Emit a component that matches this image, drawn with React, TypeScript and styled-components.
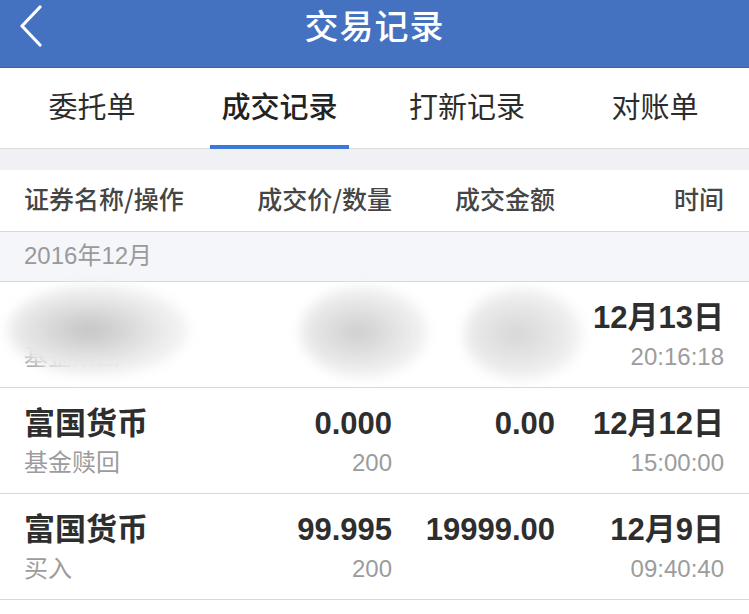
import styled, { createGlobalStyle } from 'styled-components'

const GlobalStyle = createGlobalStyle`
  html, body {
    margin: 0;
    padding: 0;
    background: #ffffff;
  }
  body {
    font-family: "Liberation Sans", "Noto Sans CJK SC", sans-serif;
    -webkit-font-smoothing: antialiased;
  }
`

const Page = styled.div`
  width: 749px;
  height: 614px;
  overflow: hidden;
  background: #ffffff;
`

const NavBar = styled.header`
  position: relative;
  display: flex;
  justify-content: center;
  align-items: flex-start;
  height: 68px;
  padding-top: 2px;
  background: #4572c0;
  border-bottom: 1px solid #3a63a8;
  box-sizing: border-box;
`

const BackButton = styled.button`
  position: absolute;
  left: 12px;
  top: 4px;
  display: flex;
  align-items: center;
  justify-content: center;
  width: 36px;
  height: 44px;
  padding: 0;
  border: none;
  background: transparent;
`

const Title = styled.h1`
  margin: 0;
  height: 46px;
  line-height: 46px;
  color: #ffffff;
  font-family: "Noto Sans CJK SC", sans-serif;
  font-size: 34px;
  font-weight: 500;
  letter-spacing: 1px;
`

const Tabs = styled.nav`
  display: grid;
  grid-template-columns: 184px 139px 184px 140px;
  column-gap: 26px;
  height: 81px;
  background: #ffffff;
  border-bottom: 1px solid #dcdce0;
  box-sizing: border-box;
`

const Tab = styled.div<{ $active?: boolean }>`
  display: flex;
  align-items: center;
  justify-content: center;
  padding-bottom: 4px;
  font-family: "Noto Sans CJK SC", sans-serif;
  font-size: 29px;
  font-weight: ${p => (p.$active ? 500 : 400)};
  color: ${p => (p.$active ? '#222222' : '#2c2c2c')};
  border-bottom: 4px solid ${p => (p.$active ? '#3a78dc' : 'transparent')};
  margin-bottom: -1px;
`

const Spacer = styled.div`
  height: 21px;
  background: #f0f0f5;
`

const Grid = styled.div`
  display: grid;
  grid-template-columns: 218px 150px 163px 169px;
  padding: 0 25px 0 24px;
  border-bottom: 1px solid #d8d8dc;
`

const HeadRow = styled(Grid)`
  height: 62px;
  align-items: center;
  box-sizing: border-box;
`

const HeadCell = styled.div<{ $right?: boolean }>`
  text-align: ${p => (p.$right ? 'right' : 'left')};
  font-family: "Noto Sans CJK SC", sans-serif;
  font-size: 25px;
  font-weight: 500;
  color: #454545;
  padding-bottom: 5px;
  white-space: nowrap;
`

const MonthRow = styled.div`
  height: 50px;
  display: flex;
  align-items: center;
  padding: 0 24px 7px;
  background: #f5f6fa;
  border-bottom: 1px solid #d8d8dc;
  box-sizing: border-box;
  font-size: 24px;
  color: #9a9a9a;
`

const Row = styled(Grid)`
  padding-top: 18px;
  padding-bottom: 15px;
  height: 106px;
  box-sizing: border-box;
`

const Cell = styled.div<{ $right?: boolean }>`
  position: relative;
  display: flex;
  flex-direction: column;
  gap: 6px;
  align-items: ${p => (p.$right ? 'flex-end' : 'flex-start')};
`

const Main = styled.div`
  height: 36px;
  line-height: 36px;
  font-size: 31px;
  font-weight: 700;
  color: #2e2e2e;
  white-space: nowrap;
`

const Sub = styled.div`
  height: 30px;
  line-height: 30px;
  font-size: 24px;
  color: #9c9c9c;
  white-space: nowrap;
`

const Smudge = styled.div<{ $w: number; $h: number; $x: number; $y: number; $tone: number }>`
  position: absolute;
  left: ${p => p.$x}px;
  top: ${p => p.$y}px;
  width: ${p => p.$w}px;
  height: ${p => p.$h}px;
  border-radius: 50%;
  background: radial-gradient(
    ellipse at 45% 50%,
    rgba(${p => p.$tone}, ${p => p.$tone}, ${p => p.$tone}, 1) 0%,
    rgba(236, 236, 236, 1) 55%,
    rgba(248, 248, 248, 0.9) 80%,
    rgba(255, 255, 255, 0) 100%
  );
  filter: blur(6px);
`

type Trade = {
  name: string
  action: string
  price: string
  qty: string
  amount: string
  date: string
  time: string
}

const trades: Trade[] = [
  { name: '富国货币', action: '基金赎回', price: '0.000', qty: '200', amount: '0.00', date: '12月12日', time: '15:00:00' },
  { name: '富国货币', action: '买入', price: '99.995', qty: '200', amount: '19999.00', date: '12月9日', time: '09:40:40' },
]

function Chevron() {
  return (
    <svg width="28" height="42" viewBox="0 0 28 42" fill="none">
      <path d="M24 2 L6 21 L24 40" stroke="#ffffff" strokeWidth="3.2" strokeLinecap="round" strokeLinejoin="round" />
    </svg>
  )
}

export default function App() {
  return (
    <>
      <GlobalStyle />
      <Page>
        <NavBar>
          <BackButton aria-label="返回">
            <Chevron />
          </BackButton>
          <Title>交易记录</Title>
        </NavBar>

        <Tabs>
          <Tab>委托单</Tab>
          <Tab $active>成交记录</Tab>
          <Tab>打新记录</Tab>
          <Tab>对账单</Tab>
        </Tabs>

        <Spacer />

        <HeadRow>
          <HeadCell>证券名称/操作</HeadCell>
          <HeadCell $right>成交价/数量</HeadCell>
          <HeadCell $right>成交金额</HeadCell>
          <HeadCell $right>时间</HeadCell>
        </HeadRow>

        <MonthRow>2016年12月</MonthRow>

        <Row>
          <Cell>
            <Main />
            <Sub>基金赎回</Sub>
            <Smudge $x={-16} $y={-16} $w={180} $h={92} $tone={196} />
          </Cell>
          <Cell $right>
            <Main />
            <Sub />
            <Smudge $x={58} $y={-14} $w={128} $h={92} $tone={206} />
          </Cell>
          <Cell $right>
            <Main />
            <Sub />
            <Smudge $x={72} $y={-12} $w={118} $h={92} $tone={214} />
          </Cell>
          <Cell $right>
            <Main>12月13日</Main>
            <Sub>20:16:18</Sub>
          </Cell>
        </Row>

        {trades.map((t, i) => (
          <Row key={i}>
            <Cell>
              <Main>{t.name}</Main>
              <Sub>{t.action}</Sub>
            </Cell>
            <Cell $right>
              <Main>{t.price}</Main>
              <Sub>{t.qty}</Sub>
            </Cell>
            <Cell $right>
              <Main>{t.amount}</Main>
            </Cell>
            <Cell $right>
              <Main>{t.date}</Main>
              <Sub>{t.time}</Sub>
            </Cell>
          </Row>
        ))}
      </Page>
    </>
  )
}
